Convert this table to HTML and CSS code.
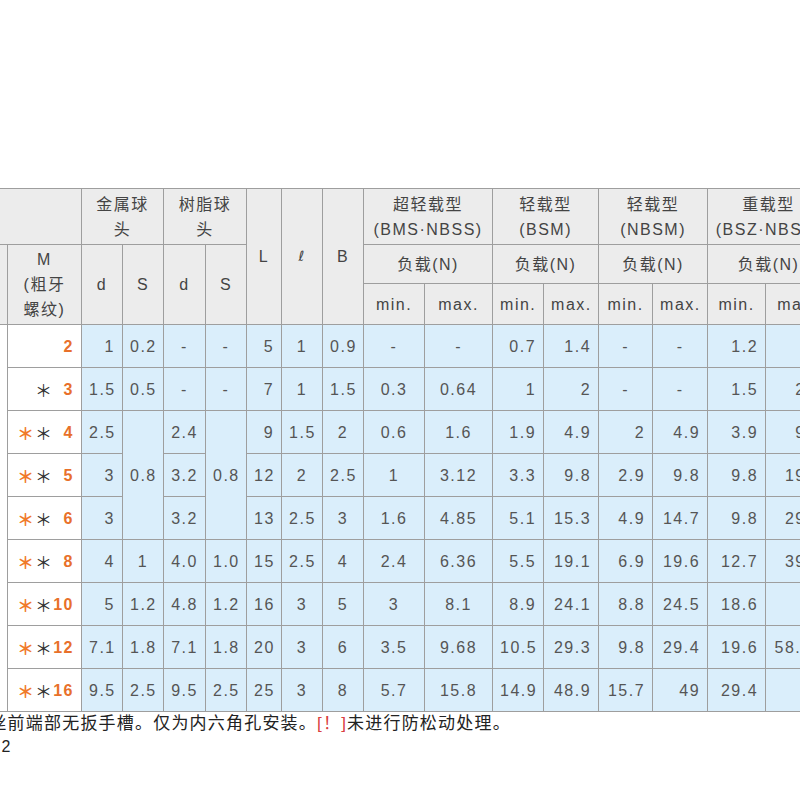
FILE: index.html
```html
<!DOCTYPE html>
<html lang="zh-CN">
<head>
<meta charset="utf-8">
<title>球头柱塞 规格表</title>
<link rel="stylesheet" href="styles.css">
</head>
<body>
<div class="page">
  <div class="shift">
    <table class="spec">
      <colgroup>
        <col class="w40"><col class="w74"><col class="w41"><col class="w41"><col class="w42"><col class="w41"><col class="w35"><col class="w41"><col class="w41"><col class="w61"><col class="w68"><col class="w51"><col class="w55"><col class="w54"><col class="w55"><col class="w58"><col class="w64">
      </colgroup>
      <thead>
        <tr class="h1">
          <th colspan="2"></th>
          <th colspan="2">金属球<br>头</th>
          <th colspan="2">树脂球<br>头</th>
          <th rowspan="3">L</th>
          <th rowspan="3" class="ell">ℓ</th>
          <th rowspan="3">B</th>
          <th colspan="2">超轻载型<br>(BMS·NBSS)</th>
          <th colspan="2">轻载型<br>(BSM)</th>
          <th colspan="2">轻载型<br>(NBSM)</th>
          <th colspan="2">重载型<br>(BSZ·NBSS)</th>
        </tr>
        <tr class="h2">
          <th rowspan="2"></th>
          <th rowspan="2">M<br>(粗牙<br>螺纹)</th>
          <th rowspan="2">d</th>
          <th rowspan="2">S</th>
          <th rowspan="2">d</th>
          <th rowspan="2">S</th>
          <th colspan="2">负载(N)</th>
          <th colspan="2">负载(N)</th>
          <th colspan="2">负载(N)</th>
          <th colspan="2">负载(N)</th>
        </tr>
        <tr class="h3">
          <th>min.</th><th>max.</th>
          <th>min.</th><th>max.</th>
          <th>min.</th><th>max.</th>
          <th>min.</th><th>max.</th>
        </tr>
      </thead>
      <tbody>
        <tr>
          <td rowspan="9" class="side"></td>
          <td class="m"><span class="mm"><span class="num">2</span></span></td>
          <td>1</td><td class="c">0.2</td><td class="c">-</td><td class="c">-</td>
          <td>5</td><td class="c">1</td><td class="c">0.9</td>
          <td class="c">-</td><td class="c">-</td>
          <td>0.7</td><td>1.4</td>
          <td class="c">-</td><td class="c">-</td>
          <td>1.2</td><td>4</td>
        </tr>
        <tr>
          <td class="m"><span class="mm"><span class="st">＊</span><span class="num">3</span></span></td>
          <td>1.5</td><td class="c">0.5</td><td class="c">-</td><td class="c">-</td>
          <td>7</td><td class="c">1</td><td class="c">1.5</td>
          <td class="c">0.3</td><td class="c">0.64</td>
          <td>1</td><td>2</td>
          <td class="c">-</td><td class="c">-</td>
          <td>1.5</td><td>2.9</td>
        </tr>
        <tr>
          <td class="m"><span class="mm"><span class="st or">＊</span><span class="st">＊</span><span class="num">4</span></span></td>
          <td>2.5</td><td rowspan="3" class="c">0.8</td><td class="c">2.4</td><td rowspan="3" class="c">0.8</td>
          <td>9</td><td class="c">1.5</td><td class="c">2</td>
          <td class="c">0.6</td><td class="c">1.6</td>
          <td>1.9</td><td>4.9</td>
          <td>2</td><td>4.9</td>
          <td>3.9</td><td>9.8</td>
        </tr>
        <tr>
          <td class="m"><span class="mm"><span class="st or">＊</span><span class="st">＊</span><span class="num">5</span></span></td>
          <td>3</td><td class="c">3.2</td>
          <td>12</td><td class="c">2</td><td class="c">2.5</td>
          <td class="c">1</td><td class="c">3.12</td>
          <td>3.3</td><td>9.8</td>
          <td>2.9</td><td>9.8</td>
          <td>9.8</td><td>19.6</td>
        </tr>
        <tr>
          <td class="m"><span class="mm"><span class="st or">＊</span><span class="st">＊</span><span class="num">6</span></span></td>
          <td>3</td><td class="c">3.2</td>
          <td>13</td><td class="c">2.5</td><td class="c">3</td>
          <td class="c">1.6</td><td class="c">4.85</td>
          <td>5.1</td><td>15.3</td>
          <td>4.9</td><td>14.7</td>
          <td>9.8</td><td>29.4</td>
        </tr>
        <tr>
          <td class="m"><span class="mm"><span class="st or">＊</span><span class="st">＊</span><span class="num">8</span></span></td>
          <td>4</td><td class="c">1</td><td class="c">4.0</td><td class="c">1.0</td>
          <td>15</td><td class="c">2.5</td><td class="c">4</td>
          <td class="c">2.4</td><td class="c">6.36</td>
          <td>5.5</td><td>19.1</td>
          <td>6.9</td><td>19.6</td>
          <td>12.7</td><td>39.2</td>
        </tr>
        <tr>
          <td class="m"><span class="mm"><span class="st or">＊</span><span class="st">＊</span><span class="num">10</span></span></td>
          <td>5</td><td class="c">1.2</td><td class="c">4.8</td><td class="c">1.2</td>
          <td>16</td><td class="c">3</td><td class="c">5</td>
          <td class="c">3</td><td class="c">8.1</td>
          <td>8.9</td><td>24.1</td>
          <td>8.8</td><td>24.5</td>
          <td>18.6</td><td>49</td>
        </tr>
        <tr>
          <td class="m"><span class="mm"><span class="st or">＊</span><span class="st">＊</span><span class="num">12</span></span></td>
          <td>7.1</td><td class="c">1.8</td><td class="c">7.1</td><td class="c">1.8</td>
          <td>20</td><td class="c">3</td><td class="c">6</td>
          <td class="c">3.5</td><td class="c">9.68</td>
          <td>10.5</td><td>29.3</td>
          <td>9.8</td><td>29.4</td>
          <td>19.6</td><td>58.84</td>
        </tr>
        <tr>
          <td class="m"><span class="mm"><span class="st or">＊</span><span class="st">＊</span><span class="num">16</span></span></td>
          <td>9.5</td><td class="c">2.5</td><td class="c">9.5</td><td class="c">2.5</td>
          <td>25</td><td class="c">3</td><td class="c">8</td>
          <td class="c">5.7</td><td class="c">15.8</td>
          <td>14.9</td><td>48.9</td>
          <td>15.7</td><td>49</td>
          <td>29.4</td><td>98</td>
        </tr>
      </tbody>
    </table>
  </div>
  <div class="notes">
    <p class="n1">※M2螺丝前端部无扳手槽。仅为内六角孔安装。<span class="warn">[！]</span>未进行防松动处理。</p>
    <p class="n2">M2</p>
  </div>
</div>
</body>
</html>
```

FILE: styles.css
```css
html, body {
  margin: 0;
  padding: 0;
  background: #ffffff;
}

body {
  font-family: "Liberation Sans", "Noto Sans CJK SC", sans-serif;
  font-size: 16px;
  letter-spacing: 1.5px;
  color: #555555;
}

.page {
  width: 800px;
  height: 800px;
  overflow: hidden;
  padding-top: 188px;
  box-sizing: border-box;
}

.shift {
  margin-left: -33px;
}

.spec {
  border-collapse: collapse;
  table-layout: fixed;
  width: 862px;
}

.w35 { width: 35px; }
.w40 { width: 40px; }
.w41 { width: 41px; }
.w42 { width: 42px; }
.w51 { width: 51px; }
.w54 { width: 54px; }
.w55 { width: 55px; }
.w58 { width: 58px; }
.w61 { width: 61px; }
.w64 { width: 64px; }
.w68 { width: 68px; }
.w74 { width: 74px; }

.spec th,
.spec td {
  border: 1px solid #9e9e9e;
  padding: 0 7px;
  line-height: 25px;
  font-weight: normal;
  white-space: nowrap;
  overflow: hidden;
}

.spec th {
  background: #ececec;
  color: #444444;
  text-align: center;
}

.spec th.ell {
  font-family: "DejaVu Sans", sans-serif;
  font-size: 14px;
  font-style: italic;
}

.h1 { height: 56px; }
.h2 { height: 39px; }
.h3 { height: 41px; }

.spec tbody tr { height: 43px; }

.spec td {
  background: #daeefb;
  text-align: right;
  color: #555555;
}

.spec td.c {
  text-align: center;
}

.spec td.side,
.spec td.m {
  background: #ffffff;
}

.mm {
  display: flex;
  justify-content: flex-end;
  align-items: center;
}

.st {
  font-family: "Noto Sans CJK SC", sans-serif;
  font-size: 17px;
  color: #333333;
  letter-spacing: 1px;
}

.st.or {
  color: #f07a2a;
  font-weight: bold;
}

.num {
  display: inline-block;
  width: 21px;
  text-align: right;
  color: #e8702a;
  font-weight: bold;
}

.notes p {
  margin: 0;
  line-height: 23px;
  color: #222222;
  font-size: 17px;
  letter-spacing: 1.2px;
  font-family: "Liberation Sans", "Noto Sans CJK SC", sans-serif;
  white-space: nowrap;
}

.notes .n1 {
  margin-left: -73px;
}

.notes .n2 {
  margin-left: -13px;
  font-size: 16px;
}

.warn {
  color: #d94040;
}
```
